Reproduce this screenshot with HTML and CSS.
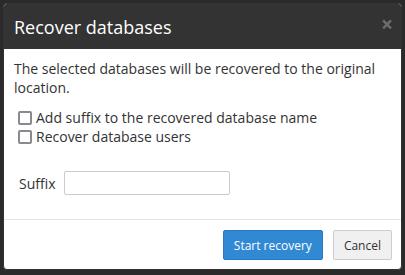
FILE: index.html
```html
<!DOCTYPE html>
<html lang="en">
<head>
  <meta charset="UTF-8">
  <title>Recover databases</title>
  <link rel="stylesheet" href="styles.css">
</head>
<body>
  <div class="modal">
    <div class="modal-header">
      <h4 class="modal-title">Recover databases</h4>
      <button class="close-button" type="button">&times;</button>
    </div>
    <div class="modal-body">
      <p class="intro">The selected databases will be recovered to the original location.</p>
      <label class="check-row"><input type="checkbox"> Add suffix to the recovered database name</label>
      <label class="check-row"><input type="checkbox"> Recover database users</label>
      <div class="suffix-row">
        <label class="suffix-label" for="suffix">Suffix</label>
        <input class="suffix-input" id="suffix" type="text">
      </div>
    </div>
    <div class="modal-footer">
      <button class="primary-button" type="button">Start recovery</button>
      <button class="default-button" type="button">Cancel</button>
    </div>
  </div>
</body>
</html>
```

FILE: styles.css
```css
body {
  margin: 0;
  padding: 3px;
  background-color: #2a2a2a;
  font-family: "Open Sans", sans-serif;
  font-size: 14px;
  color: #333;
}
.modal {
  background: white;
  border: 1px solid #333;
  border-radius: 4px;
  overflow: hidden;
}
.modal-header {
  display: flex;
  align-items: center;
  justify-content: space-between;
  height: 45px;
  padding: 0 8px 0 10px;
  background-color: #333;
}
.modal-title {
  margin: 0;
  font-size: 18px;
  font-weight: normal;
  color: white;
}
.close-button {
  padding: 0;
  margin-top: -5px;
  border: none;
  background: none;
  color: #6e6e6e;
  font-family: "Open Sans", sans-serif;
  font-size: 21px;
  font-weight: bold;
  line-height: 1;
  cursor: pointer;
}
.modal-body {
  padding: 10px 10px 24px;
}
.intro {
  margin: 0 0 11px;
  line-height: 19px;
}
.check-row {
  display: flex;
  align-items: center;
  gap: 4px;
  line-height: 19px;
  padding-left: 4px;
}
.check-row input {
  appearance: none;
  box-sizing: border-box;
  margin: 0;
  width: 14px;
  height: 14px;
  border: 2px solid #8a8890;
  border-radius: 2px;
  background: white;
}
.suffix-row {
  display: flex;
  align-items: center;
  gap: 8px;
  margin-top: 25px;
  padding-left: 5px;
}
.suffix-input {
  padding: 0 6px;
  box-sizing: border-box;
  border: 1px solid #ccc;
  border-radius: 2px;
  width: 166px;
  height: 24px;
}
.modal-footer {
  display: flex;
  justify-content: flex-end;
  gap: 10px;
  padding: 10px 9px 9px;
  border-top: 1px solid #e5e5e5;
}
.primary-button, .default-button {
  height: 30px;
  padding: 0 10px;
  border-radius: 2px;
  font-family: "Open Sans", sans-serif;
  font-size: 12px;
  cursor: pointer;
}
.primary-button {
  border: 1px solid #2a78bf;
  background-color: #3188d3;
  color: white;
}
.default-button {
  border: 1px solid #ccc;
  background-color: #f0f0f0;
  color: #333;
}
```
